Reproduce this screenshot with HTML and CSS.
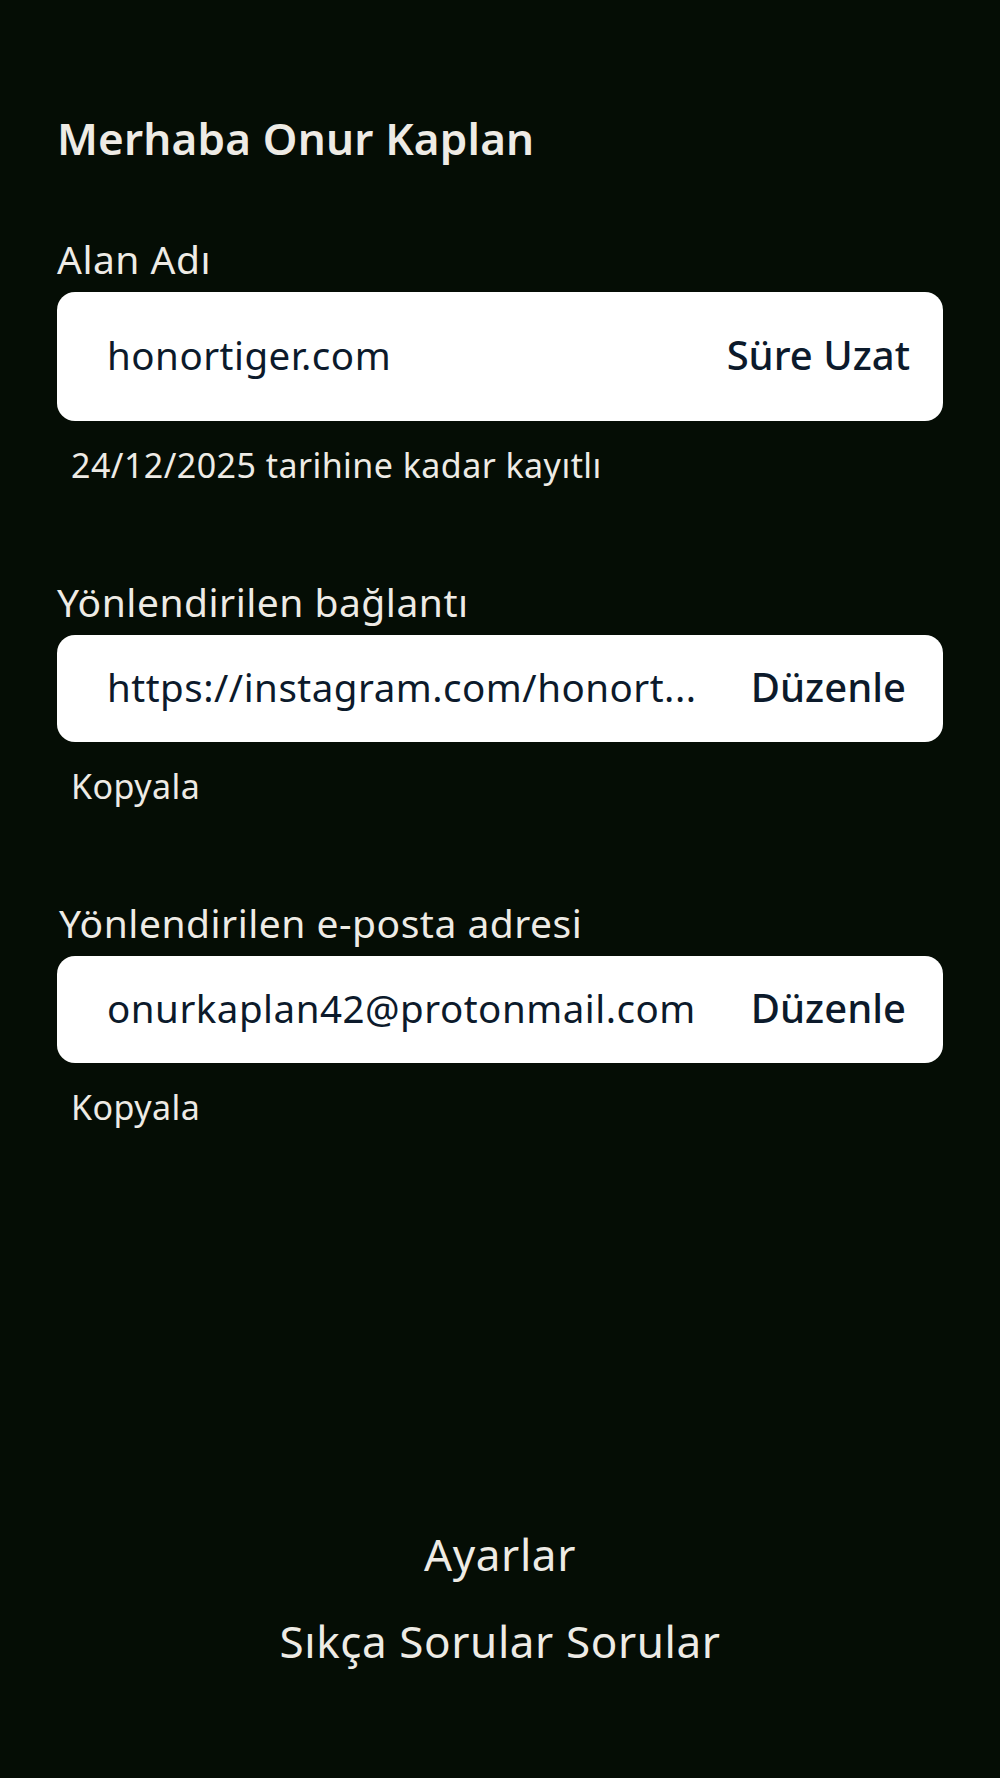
FILE: index.html
```html
<!DOCTYPE html>
<html lang="tr">
<head>
    <meta charset="UTF-8">
    <meta name="viewport" content="width=device-width, initial-scale=1.0">
    <title>Hesabım</title>
    <link rel="stylesheet" href="styles.css">
</head>
<body>
    <div class="page">
        <h1 class="greeting">Merhaba Onur Kaplan</h1>

        <div class="section first">
            <div class="label">Alan Adı</div>
            <div class="field tall">
                <span class="value">honortiger.com</span>
                <a class="action" href="#">Süre Uzat</a>
            </div>
            <div class="note">24/12/2025 tarihine kadar kayıtlı</div>
        </div>

        <div class="section">
            <div class="label">Yönlendirilen bağlantı</div>
            <div class="field">
                <span class="value">https://instagram.com/honort...</span>
                <a class="action" href="#">Düzenle</a>
            </div>
            <a class="note" href="#">Kopyala</a>
        </div>

        <div class="section">
            <div class="label shifted">Yönlendirilen e-posta adresi</div>
            <div class="field">
                <span class="value">onurkaplan42@protonmail.com</span>
                <a class="action" href="#">Düzenle</a>
            </div>
            <a class="note" href="#">Kopyala</a>
        </div>

        <div class="footer">
            <a href="#">Ayarlar</a>
            <a href="#">Sıkça Sorular Sorular</a>
        </div>
    </div>
</body>
</html>
```

FILE: styles.css
```css
body {
    margin: 0;
    background-color: #050d05;
    color: #eeebe5;
    font-family: "Noto Sans", sans-serif;
}

a {
    color: inherit;
    text-decoration: none;
}

.page {
    min-height: 100vh;
    box-sizing: border-box;
    display: flex;
    flex-direction: column;
    padding: 112px 57px 111px 57px;
}

.greeting {
    margin: 0;
    font-size: 44px;
    line-height: 52px;
    font-weight: 600;
    letter-spacing: 0.2px;
}

.section {
    display: flex;
    flex-direction: column;
    align-items: flex-start;
    margin-top: 94px;
}

.section.first {
    margin-top: 72px;
}

.label {
    font-size: 39px;
    line-height: 46px;
    letter-spacing: 0.5px;
    margin-bottom: 10px;
}

.label.shifted {
    margin-left: 2px;
}

.field {
    align-self: stretch;
    box-sizing: border-box;
    height: 107px;
    display: flex;
    align-items: center;
    justify-content: space-between;
    gap: 20px;
    padding: 0 37px 4px 50px;
    background-color: #fff;
    border-radius: 18px;
    color: #0c1a2b;
}

.field.tall {
    height: 129px;
    padding-right: 33px;
}

.value {
    font-size: 38.5px;
    line-height: 44px;
    letter-spacing: 0.5px;
    white-space: nowrap;
}

.action {
    font-size: 40px;
    line-height: 46px;
    font-weight: 500;
    white-space: nowrap;
}

.note {
    margin-top: 24px;
    margin-left: 14px;
    font-size: 34px;
    line-height: 40px;
    letter-spacing: 0.45px;
}

.footer {
    margin-top: auto;
    display: flex;
    flex-direction: column;
    align-items: center;
    gap: 35px;
    font-size: 44px;
    line-height: 52px;
    letter-spacing: 0.6px;
}
```
